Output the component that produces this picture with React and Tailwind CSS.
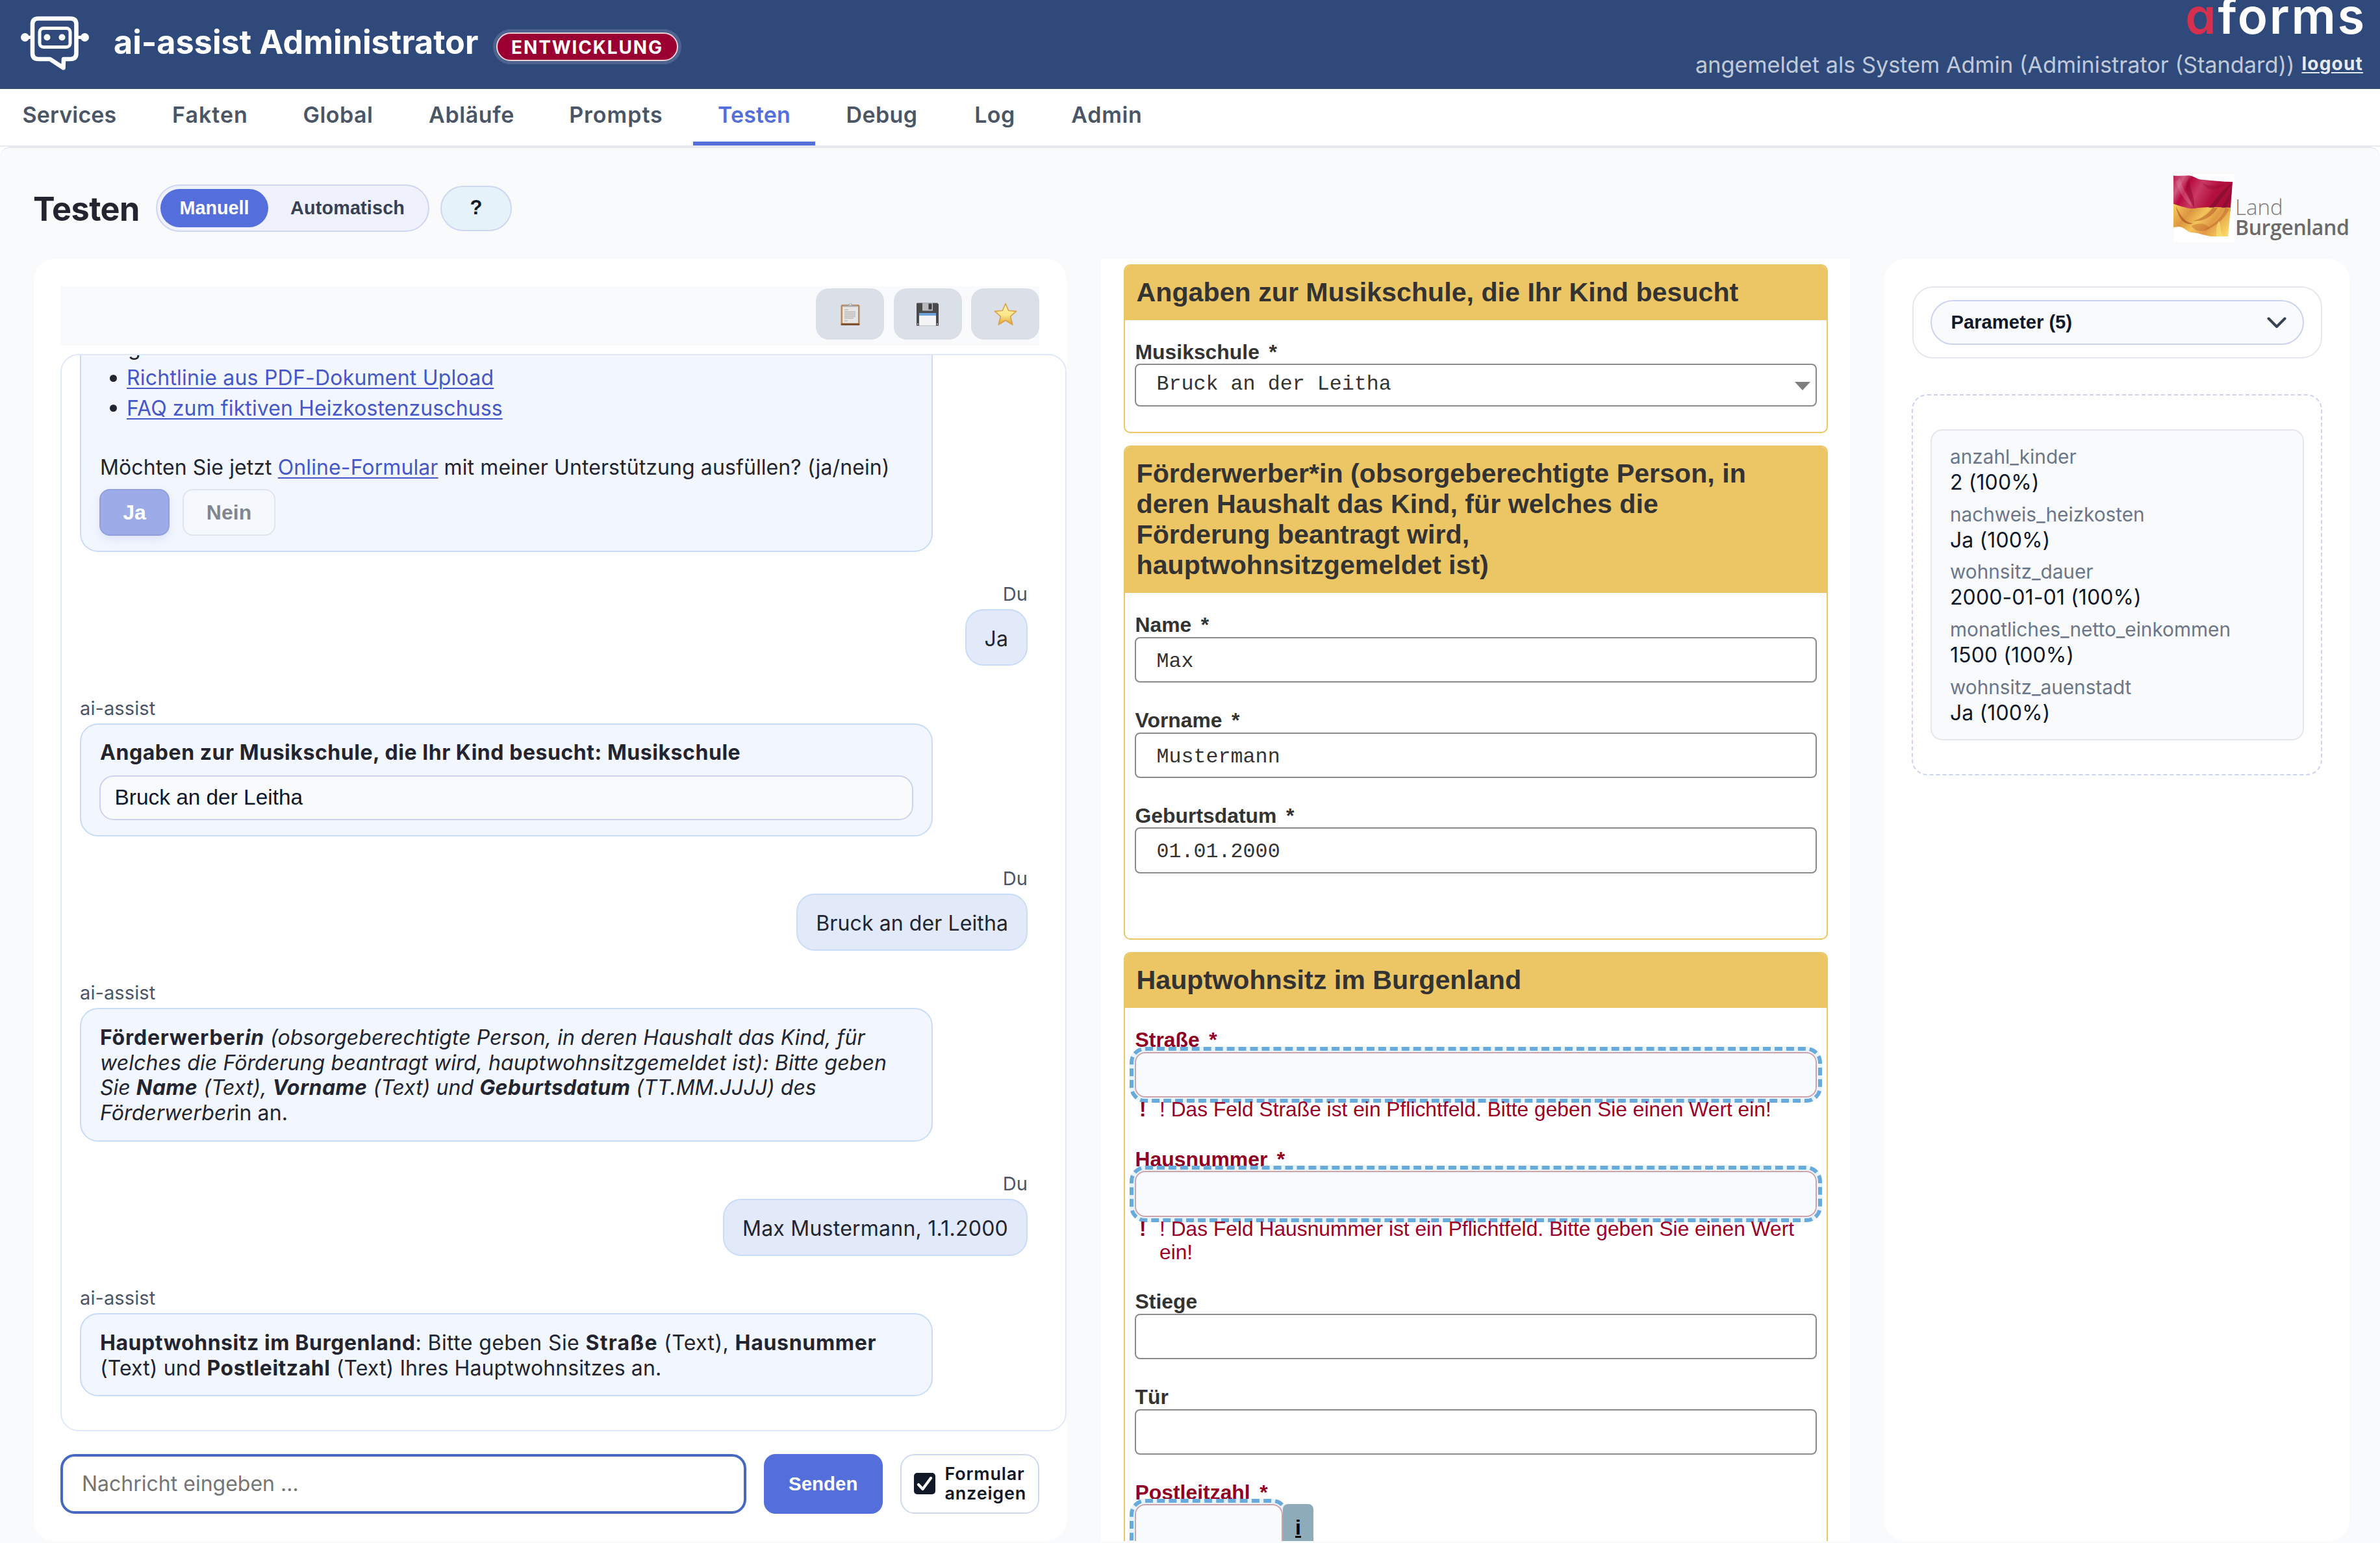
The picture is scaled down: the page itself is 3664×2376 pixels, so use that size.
import React from "react";

const RobotIcon = () => (
  <svg className="block h-[90px] w-[110px]" viewBox="28 22 110 90" fill="none">
    <path
      d="M59 28.5H108.5Q117.5 28.5 117.5 37.5V82Q117.5 91 108.5 91H98L97.5 104.500L77 91H59Q50 91 50 82V37.500Q50 28.5 59 28.500Z"
      stroke="#fff"
      strokeWidth="6.6"
      strokeLinejoin="round"
    />
    <rect x="61" y="43.500" width="47" height="29" rx="6" stroke="#fff" strokeWidth="5" />
    <circle cx="72.500" cy="57.500" r="5" fill="#fff" />
    <circle cx="95.500" cy="57.500" r="5" fill="#fff" />
    <circle cx="38.500" cy="57.500" r="6.500" fill="#fff" />
    <circle cx="130.500" cy="57.500" r="6.500" fill="#fff" />
    <path d="M38 57.500H50M118 57.500H130" stroke="#fff" strokeWidth="5" />
  </svg>
);

const FlagIcon = () => (
  <svg className="block h-[105px] w-[94px] shrink-0" viewBox="0 0 94 105">
    <defs>
      <linearGradient id="red" x1="0" y1="0" x2="1" y2="0.35">
        <stop offset="0" stopColor="#b8174a" />
        <stop offset="0.18" stopColor="#cf5a7c" />
        <stop offset="0.3" stopColor="#b80a40" />
        <stop offset="0.5" stopColor="#c93a63" />
        <stop offset="0.75" stopColor="#b5103f" />
        <stop offset="1" stopColor="#a30f38" />
      </linearGradient>
      <linearGradient id="gold" x1="0" y1="0" x2="1" y2="0.5">
        <stop offset="0" stopColor="#f7cf5e" />
        <stop offset="0.3" stopColor="#dd9540" />
        <stop offset="0.5" stopColor="#f3c45a" />
        <stop offset="0.7" stopColor="#e09a45" />
        <stop offset="1" stopColor="#f9d765" />
      </linearGradient>
      <clipPath id="cloth">
        <path d="M0 2.500Q12 3 24 2.200C32 3 36 8 43 8.500C60 10 75 12 91 12L88 52L84 96H58C44 94 38 90 27 90C20 88 17 82 8 81L0 82Z" />
      </clipPath>
    </defs>
    <rect width="94" height="105" fill="#fff" />
    <g clipPath="url(#cloth)">
      <rect width="94" height="58" fill="url(#red)" />
      <path d="M0 46C10 49 22 54 32 53C50 50 70 51 94 52V105H0Z" fill="url(#gold)" />
      <path d="M26 4C20 18 34 30 32 52C26 40 18 28 20 14Z" fill="#8e0a30" opacity="0.55" />
      <path d="M10 6C12 22 26 36 28 50C16 40 8 26 4 12Z" fill="#e08aa2" opacity="0.35" />
      <path d="M91 14C76 22 62 44 54 52L62 52C72 42 82 26 91 14Z" fill="#7d0c2c" opacity="0.6" />
      <path d="M91 26C84 34 78 46 74 52L80 52C84 44 88 36 91 26Z" fill="#7d0c2c" opacity="0.5" />
      <path d="M44 12C50 20 66 18 78 16C66 26 52 28 44 12Z" fill="#8e0a30" opacity="0.35" />
      <path d="M4 50C10 62 16 74 30 76C20 80 8 72 4 50Z" fill="#a8481c" opacity="0.6" />
      <path d="M60 52C54 62 40 70 30 72C44 74 60 66 68 52Z" fill="#b2521f" opacity="0.5" />
      <path d="M80 52C76 66 60 80 46 86C62 84 78 70 86 54Z" fill="#b85c22" opacity="0.45" />
      <path d="M28 80C38 74 52 76 56 84C48 90 34 90 28 80Z" fill="#c0652b" opacity="0.45" />
      <path d="M70 72C74 80 72 90 76 96H66C66 86 66 78 70 72Z" fill="#fbe27c" opacity="0.6" />
    </g>
  </svg>
);

const ClipboardIcon = () => (
  <svg className="block h-[36px] w-[32px]" viewBox="0 0 32 36">
    <rect x="1.500" y="3" width="29" height="32" rx="2.500" fill="#b98a5a" />
    <rect x="1.500" y="32" width="29" height="3" rx="1.500" fill="#7c5231" />
    <rect x="4" y="6" width="24" height="25.500" fill="#e6e6e6" />
    <path d="M7 11H13M7 14H24M7 16.500H24M7 19H24M7 21.500H24M7 24H21M7 28H12" stroke="#bdbdbd" strokeWidth="1.500" />
    <path d="M5 6.500V4.500H12.500Q13 1 16 1T19.500 4.500H27V6.500Z" fill="#a9abb0" />
    <circle cx="16" cy="2.800" r="1.200" fill="#e9ebf0" />
  </svg>
);

const FloppyIcon = () => (
  <svg className="block h-[36px] w-[36px]" viewBox="0 0 36 36">
    <path d="M2 0.500H33L35 2.500V35.500H1V1.500Z" fill="#4a4a4c" />
    <rect x="10" y="0.500" width="16" height="12" fill="#b9babd" />
    <rect x="19.500" y="1.500" width="5" height="9" fill="#3b3b3d" />
    <rect x="5" y="16" width="26" height="19.500" rx="1" fill="#f4f4f6" />
    <path d="M5 17Q5 16 6 16H30Q31 16 31 17V20H5Z" fill="#6da2dc" />
    <circle cx="3" cy="33" r="1" fill="#ddd" />
    <circle cx="33" cy="33" r="1" fill="#ddd" />
  </svg>
);

const StarIcon = () => (
  <svg className="block h-[36px] w-[36px]" viewBox="0 0 36 36">
    <defs>
      <linearGradient id="star" x1="0" y1="0" x2="0" y2="1">
        <stop offset="0" stopColor="#fdf3b4" />
        <stop offset="0.550" stopColor="#fbe88a" />
        <stop offset="1" stopColor="#dfa133" />
      </linearGradient>
    </defs>
    <path
      d="M18 1.500L22.600 12.300L34.500 13.400L25.500 21.300L28.800 34L18 27.200L7.200 34L10.500 21.300L1.500 13.400L13.400 12.300Z"
      fill="url(#star)"
      stroke="#d9a048"
      strokeWidth="1.600"
      strokeLinejoin="round"
    />
  </svg>
);

const TABS = [
  ["Services", "w-[216px] pr-[2px] tracking-[0.14px]"],
  ["Fakten", "w-[189px] pl-[2px] tracking-[1px]"],
  ["Global", "w-[183px] tracking-[0.5px]"],
  ["Abläufe", "w-[202px] pl-[2px] tracking-[0.6px]"],
  ["Prompts", "w-[217px] pl-[4px] tracking-[1px]"],
  ["Testen", "w-[188px] tracking-[0.13px]"],
  ["Debug", "w-[181px] tracking-[0.4px]"],
  ["Log", "w-[143px] tracking-[0.5px]"],
  ["Admin", "w-[176px] pl-[2px] tracking-[0.7px]"],
];

function Header() {
  return (
    <header className="flex h-[137px] shrink-0 items-start justify-between bg-[#2f497b] pr-[26px] pl-[28px]">
      <div className="flex items-start">
        <div className="pt-[22px]">
          <RobotIcon />
        </div>
        <div className="mt-[35px] ml-[37px] w-[589px] text-[50.3px] leading-[60px] font-bold whitespace-nowrap text-white">
          ai-assist Administrator
        </div>
        <div className="mt-[50px] flex h-[44px] w-[280px] items-center justify-center rounded-full border-2 border-[#ecd0dc] bg-[#9b0033] pt-[1px] text-[28px] font-bold tracking-[1.85px] text-white shadow-[0_0_0_5px_rgba(255,255,255,0.15)]">
          ENTWICKLUNG
        </div>
      </div>
      <div className="flex flex-col items-end whitespace-nowrap">
        <div className="-mt-[11px] -mr-[5px] flex text-[76px] leading-[70px] font-semibold tracking-[2.7px] text-white">
          <span className="text-[#d6304f] [font-feature-settings:'cv11']">a</span>
          <span>forms</span>
        </div>
        <div className="mt-[20px] flex items-baseline text-[34.3px] leading-[42px] text-[#c1c9d8]">
          <span>angemeldet als System Admin (Administrator (Standard))</span>
          <a className="relative -top-[4px] ml-[11px] text-[28px] leading-[34px] font-bold tracking-[1.2px] text-[#e6eaf2] underline decoration-2 underline-offset-[3px]">
            logout
          </a>
        </div>
      </div>
    </header>
  );
}

function Nav() {
  return (
    <nav className="flex h-[89px] shrink-0 gap-[12px] border-b-2 border-[#e5e8ec] bg-white text-[34px] font-semibold text-[#4a5666]">
      {TABS.map(([name, cls]) => (
        <div
          key={name}
          className={
            "flex flex-col items-center justify-between " + cls + (name === "Testen" ? " text-[#546fdb]" : "")
          }
        >
          <span className="leading-[80px]">{name}</span>
          {name === "Testen" && <span className="h-[6px] w-[188px] bg-[#546fdb]" />}
        </div>
      ))}
    </nav>
  );
}

function TitleRow() {
  return (
    <div className="flex h-[171px] shrink-0 items-center pt-[14px] pr-[47px] pl-[51px]">
      <h1 className="w-[189px] pt-[2px] text-[50.4px] leading-[60px] font-bold tracking-[-0.6px] text-[#22252f]">
        Testen
      </h1>
      <div className="flex h-[73px] w-[421px] items-center rounded-full border-2 border-[#cfd6f0] bg-[#eff1fd] pl-[5px] font-['Liberation_Sans'] text-[28.8px] font-bold">
        <div className="flex h-[59px] w-[166px] items-center justify-center rounded-full bg-[#546fdb] text-white">
          Manuell
        </div>
        <div className="ml-[34px] tracking-[0.15px] text-[#374151]">Automatisch</div>
      </div>
      <div className="ml-[17px] flex h-[70px] w-[110px] items-center justify-center rounded-full border-2 border-[#cfd6f0] bg-[#e5f2fa] font-['Liberation_Sans'] text-[31px] font-bold text-[#111827]">
        ?
      </div>
      <div className="ml-auto flex w-[271px] items-start">
        <FlagIcon />
        <div className="pt-[36px] pl-[1px] font-['Open_Sans'] whitespace-nowrap">
          <div className="text-[33px] leading-[30px] font-light text-[#7c7a7b]">Land</div>
          <div className="text-[32px] leading-[31px] font-semibold tracking-[-0.4px] text-[#6b696a]">Burgenland</div>
        </div>
      </div>
    </div>
  );
}

const ToolButton = ({ children }) => (
  <div className="flex h-[79px] w-[105px] items-center justify-center rounded-[20px] bg-[#dbdfe8]">{children}</div>
);

const Link = ({ children }) => (
  <a className="text-[#4557c9] underline decoration-2 underline-offset-[4px]">{children}</a>
);

const B = ({ children, className = "tracking-[0.55px]" }) => <b className={"font-bold " + className}>{children}</b>;

const Bullet = () => <span className="mr-[15px] ml-[15px] h-[11px] w-[11px] rounded-full bg-[#22252f]" />;

function Assist({ children, className }) {
  return (
    <div className="mt-[47.400px]">
      <div className="mb-[6px] text-[29px] leading-[35px] text-[#4a5568]">ai-assist</div>
      <div
        className={
          "w-[1313px] rounded-[28px] border-2 border-[#c8dcf8] bg-[#f2f6fe] pt-[24.600px] pl-[29px] leading-[38.900px] whitespace-nowrap " +
          className
        }
      >
        {children}
      </div>
    </div>
  );
}

function User({ children }) {
  return (
    <div className="mt-[47.400px] flex flex-col items-end">
      <div className="mb-[6px] text-[29px] leading-[35px] text-[#4a5568]">Du</div>
      <div className="flex h-[87.500px] items-center rounded-[28px] border-2 border-[#c8dcf8] bg-[#e2eafa] px-[28px] pt-[4px]">
        {children}
      </div>
    </div>
  );
}

function Chat() {
  return (
    <section className="flex h-[1974px] w-[1590px] shrink-0 flex-col rounded-[32px] bg-white pt-[42px] pl-[41px]">
      <div className="flex h-[91px] w-[1507px] shrink-0 items-start justify-end gap-[14.500px] bg-[#f9fafc] pt-[3px]">
        <ToolButton>
          <ClipboardIcon />
        </ToolButton>
        <ToolButton>
          <FloppyIcon />
        </ToolButton>
        <ToolButton>
          <StarIcon />
        </ToolButton>
      </div>

      <div className="mt-[13px] h-[1659px] w-[1549px] shrink-0 overflow-hidden rounded-[28px] border-2 border-[#dfe8fa] bg-white pr-[58px] pl-[28px] text-[32px] tracking-[0.1px] text-[#22252f]">
        <div className="-mt-[36px] h-[338.500px] w-[1313px] rounded-b-[28px] border-2 border-t-0 border-[#c8dcf8] bg-[#f2f6fe] pt-[1.500px] pl-[28px] whitespace-nowrap">
          <ul className="pl-[1px] leading-[46.600px]">
            <li className="pl-[43px]">g</li>
            <li className="flex items-center tracking-[0.22px]">
              <Bullet />
              <Link>Richtlinie aus PDF-Dokument Upload</Link>
            </li>
            <li className="flex items-center">
              <Bullet />
              <Link>FAQ zum fiktiven Heizkostenzuschuss</Link>
            </li>
          </ul>
          <div className="mt-[47.500px] pl-[1px] leading-[39px]">
            Möchten Sie jetzt <Link>Online-Formular</Link> mit meiner Unterstützung ausfüllen? (ja/nein)
          </div>
          <div className="mt-[14px] flex gap-[20px] font-['Liberation_Sans'] text-[32px] font-bold tracking-normal">
            <div className="flex h-[72px] w-[108px] items-center justify-center rounded-[16px] border-2 border-[#929fdf] bg-[#9dabe8] text-white shadow-[0_6px_14px_rgba(84,111,219,0.12)]">
              Ja
            </div>
            <div className="flex h-[72px] w-[143px] items-center justify-center rounded-[16px] border-2 border-[#dfe5ec] bg-[#f5f9fd] text-[#808692]">
              Nein
            </div>
          </div>
        </div>

        <User>Ja</User>

        <Assist className="h-[174px]">
          <B>Angaben zur Musikschule, die Ihr Kind besucht: Musikschule</B>
          <div className="mt-[14.400px] -ml-[1px] flex h-[69px] w-[1253px] items-center rounded-[22px] border-2 border-[#cdd3ee] bg-[#f9fafc] pt-[1px] pl-[21.500px] font-['Liberation_Sans'] text-[33.400px] tracking-normal text-[#0f172a]">
            Bruck an der Leitha
          </div>
        </Assist>

        <User>Bruck an der Leitha</User>

        <Assist className="h-[206px]">
          <div className="tracking-[0.060px]">
            <B className="tracking-[0.750px]">
              Förderwerber<i>in</i>
            </B>{" "}
            <i>(obsorgeberechtigte Person, in deren Haushalt das Kind, für</i>
          </div>
          <div className="tracking-[0.110px] italic">
            welches die Förderung beantragt wird, hauptwohnsitzgemeldet ist): Bitte geben
          </div>
          <div className="tracking-[0.040px] italic">
            Sie <B className="tracking-[0.400px]">Name</B> (Text), <B className="tracking-[0.400px]">Vorname</B> (Text)
            und <B className="tracking-[0.400px]">Geburtsdatum</B> (TT.MM.JJJJ) des
          </div>
          <div>
            <i>Förderwerber</i>in an.
          </div>
        </Assist>

        <User>
          <span className="tracking-[0.240px]">Max Mustermann, 1.1.2000</span>
        </User>

        <Assist className="h-[128px]">
          <div className="tracking-[0.400px]">
            <B>Hauptwohnsitz im Burgenland</B>: Bitte geben Sie <B className="tracking-[1.200px]">Straße</B> (Text),{" "}
            <B className="tracking-[0.700px]">Hausnummer</B>
          </div>
          <div>
            (Text) und <B>Postleitzahl</B> (Text) Ihres Hauptwohnsitzes an.
          </div>
        </Assist>
      </div>

      <div className="mt-[35px] flex h-[91.500px] shrink-0 gap-[27px]">
        <div className="flex w-[1056px] items-center rounded-[22px] border-4 border-[#4668bf] bg-white pl-[29px] text-[32px] text-[#757575]">
          Nachricht eingeben …
        </div>
        <div className="flex w-[182.500px] items-center justify-center rounded-[18px] bg-[#546fdb] font-['Liberation_Sans'] text-[29.500px] font-bold text-white">
          Senden
        </div>
        <div className="flex w-[214.500px] items-center rounded-[22px] border-2 border-[#d0d8f1] pl-[19px] text-[27px] leading-[30px] font-semibold tracking-[0.800px] text-[#111827]">
          <svg className="mr-[15px] block h-[33px] w-[33px] shrink-0" viewBox="0 0 33 33">
            <rect width="33" height="33" rx="5" fill="#111827" />
            <path d="M7 18L13.500 25L26 8" fill="none" stroke="#fff" strokeWidth="4.200" strokeLinecap="round" strokeLinejoin="round" />
          </svg>
          <div>
            Formular
            <br />
            anzeigen
          </div>
        </div>
      </div>
    </section>
  );
}

const Fieldset = ({ title, children, className }) => (
  <div className={"w-[1084px] shrink-0 overflow-hidden rounded-[10px] border-2 border-[#ecc665] bg-white " + className}>
    <div className="bg-[#ecc665] pt-[18px] pb-[19px] pl-[18px] text-[41.200px] leading-[47px] font-bold whitespace-nowrap">
      {title.map((line) => (
        <div key={line}>{line}</div>
      ))}
    </div>
    <div className="flex flex-col gap-[39.300px] pt-[31.500px] pl-[15.500px]">{children}</div>
  </div>
);

const Label = ({ text, required, error }) => (
  <div
    className={
      "mb-[0.800px] flex gap-[14.500px] pl-[0.500px] text-[31.900px] leading-[36px] font-bold " +
      (error ? "text-[#8f0024]" : "")
    }
  >
    <span>{text}</span>
    {required && <span>*</span>}
  </div>
);

const Field = ({ label, required, value }) => (
  <div>
    <Label text={label} required={required} />
    <div className="flex h-[70.700px] w-[1050px] items-center rounded-[8px] border-2 border-[#8a8a8a] pt-[7px] pl-[31.500px] font-['Liberation_Mono'] text-[31.700px]">
      {value}
    </div>
  </div>
);

const INVALID =
  "h-[70.700px] rounded-[16px] border-2 border-[#cfa3ac] bg-[#f9fcff] shadow-[0_0_0_8px_#e8f4fc] outline-[6px] outline-offset-2 outline-dashed outline-[#69aadd]";

const ErrorField = ({ label, lines }) => (
  <div>
    <Label text={label} required error />
    <div className={"w-[1050px] " + INVALID} />
    <div className="relative flex pt-[1px] text-[31.750px] leading-[35.800px] whitespace-nowrap text-[#9b0028]">
      <b className="w-[38px] pl-[7px] text-[#8f0024]">!</b>
      <div>
        {lines.map((line) => (
          <div key={line}>{line}</div>
        ))}
      </div>
    </div>
  </div>
);

function FormPanel() {
  return (
    <section className="ml-[53px] flex h-[1974px] w-[1153px] shrink-0 flex-col items-start overflow-hidden bg-white pt-[8px] pl-[34.500px] font-['Liberation_Sans'] text-[#333]">
      <Fieldset title={["Angaben zur Musikschule, die Ihr Kind besucht"]} className="h-[260px]">
        <div className="-mt-[1px]">
          <Label text="Musikschule" required />
          <div className="flex h-[65.500px] w-[1050px] items-center justify-between rounded-[8px] border-2 border-[#8a8a8a] pr-[8px] pl-[31.500px] font-['Liberation_Mono'] text-[31.700px]">
            <span>Bruck an der Leitha</span>
            <svg className="mt-[3px] block h-[13px] w-[24px]" viewBox="0 0 24 13">
              <path d="M0 0H24L12 13Z" fill="#7f7f7f" />
            </svg>
          </div>
        </div>
      </Fieldset>
      <Fieldset
        title={[
          "Förderwerber*in (obsorgeberechtigte Person, in",
          "deren Haushalt das Kind, für welches die",
          "Förderung beantragt wird,",
          "hauptwohnsitzgemeldet ist)",
        ]}
        className="mt-[18.500px] h-[761.500px]"
      >
        <Field label="Name" required value="Max" />
        <Field label="Vorname" required value="Mustermann" />
        <Field label="Geburtsdatum" required value="01.01.2000" />
      </Fieldset>
      <Fieldset title={["Hauptwohnsitz im Burgenland"]} className="mt-[18.500px] h-[1100px]">
        <ErrorField
          label="Straße"
          lines={["! Das Feld Straße ist ein Pflichtfeld. Bitte geben Sie einen Wert ein!"]}
        />
        <ErrorField
          label="Hausnummer"
          lines={["! Das Feld Hausnummer ist ein Pflichtfeld. Bitte geben Sie einen Wert", "ein!"]}
        />
        <Field label="Stiege" />
        <Field label="Tür" />
        <div>
          <Label text="Postleitzahl" required error />
          <div className="flex">
            <div className={"w-[228px] " + INVALID} />
            <div className="relative flex h-[72px] w-[47px] justify-center rounded-[8px] bg-[#8dabb8] pt-[18px] text-[32px] leading-[36px] font-bold text-black underline decoration-[3px] underline-offset-[2px]">
              i
            </div>
          </div>
        </div>
      </Fieldset>
    </section>
  );
}

const PARAMS = [
  ["anzahl_kinder", "2 (100%)"],
  ["nachweis_heizkosten", "Ja (100%)"],
  ["wohnsitz_dauer", "2000-01-01 (100%)"],
  ["monatliches_netto_einkommen", "1500 (100%)"],
  ["wohnsitz_auenstadt", "Ja (100%)"],
];

function ParamPanel() {
  return (
    <section className="ml-[53px] flex h-[1974px] w-[716px] shrink-0 flex-col rounded-[32px] bg-white pt-[42px] pl-[42px]">
      <div className="ml-[1px] flex h-[111px] w-[631px] items-center justify-center rounded-[32px] border-2 border-[#e4e8ee]">
        <div className="flex h-[69px] w-[575px] items-center justify-between rounded-full border-2 border-[#cdd3ee] bg-[#f9fafc] pr-[25px] pl-[29.500px] font-['Liberation_Sans'] text-[29.200px] font-bold text-[#111827]">
          <span className="pt-[1px]">Parameter (5)</span>
          <svg className="block h-[18px] w-[30px]" viewBox="0 0 30 18" fill="none">
            <path d="M2.500 2.500L15 15L27.500 2.500" stroke="#374151" strokeWidth="4" strokeLinecap="round" strokeLinejoin="round" />
          </svg>
        </div>
      </div>
      <div className="mt-[55px] h-[587px] w-[632px] rounded-[24px] border-2 border-dashed border-[#ccd3f0] pt-[52px] pl-[27px]">
        <div className="flex h-[479px] w-[575px] flex-col gap-[11.700px] rounded-[18px] border-2 border-[#e4e8ec] bg-[#f9fafc] pt-[22px] pl-[28px] whitespace-nowrap">
          {PARAMS.map(([key, value]) => (
            <div key={key}>
              <div className="text-[29.750px] leading-[37px] text-[#6b7689]">{key}</div>
              <div className="pt-[1px] text-[32px] leading-[39px] tracking-[0.100px] text-[#0f172a]">{value}</div>
            </div>
          ))}
        </div>
      </div>
    </section>
  );
}

export default function App() {
  return (
    <div className="flex h-[2376px] w-[3664px] flex-col overflow-hidden bg-white font-['Inter']">
      <Header />
      <Nav />
      <main className="flex h-[2150px] flex-col rounded-t-[16px] border-t-2 border-[#e5e8ec] bg-[#f9fafc]">
        <TitleRow />
        <div className="flex pl-[52px]">
          <Chat />
          <FormPanel />
          <ParamPanel />
        </div>
      </main>
    </div>
  );
}
